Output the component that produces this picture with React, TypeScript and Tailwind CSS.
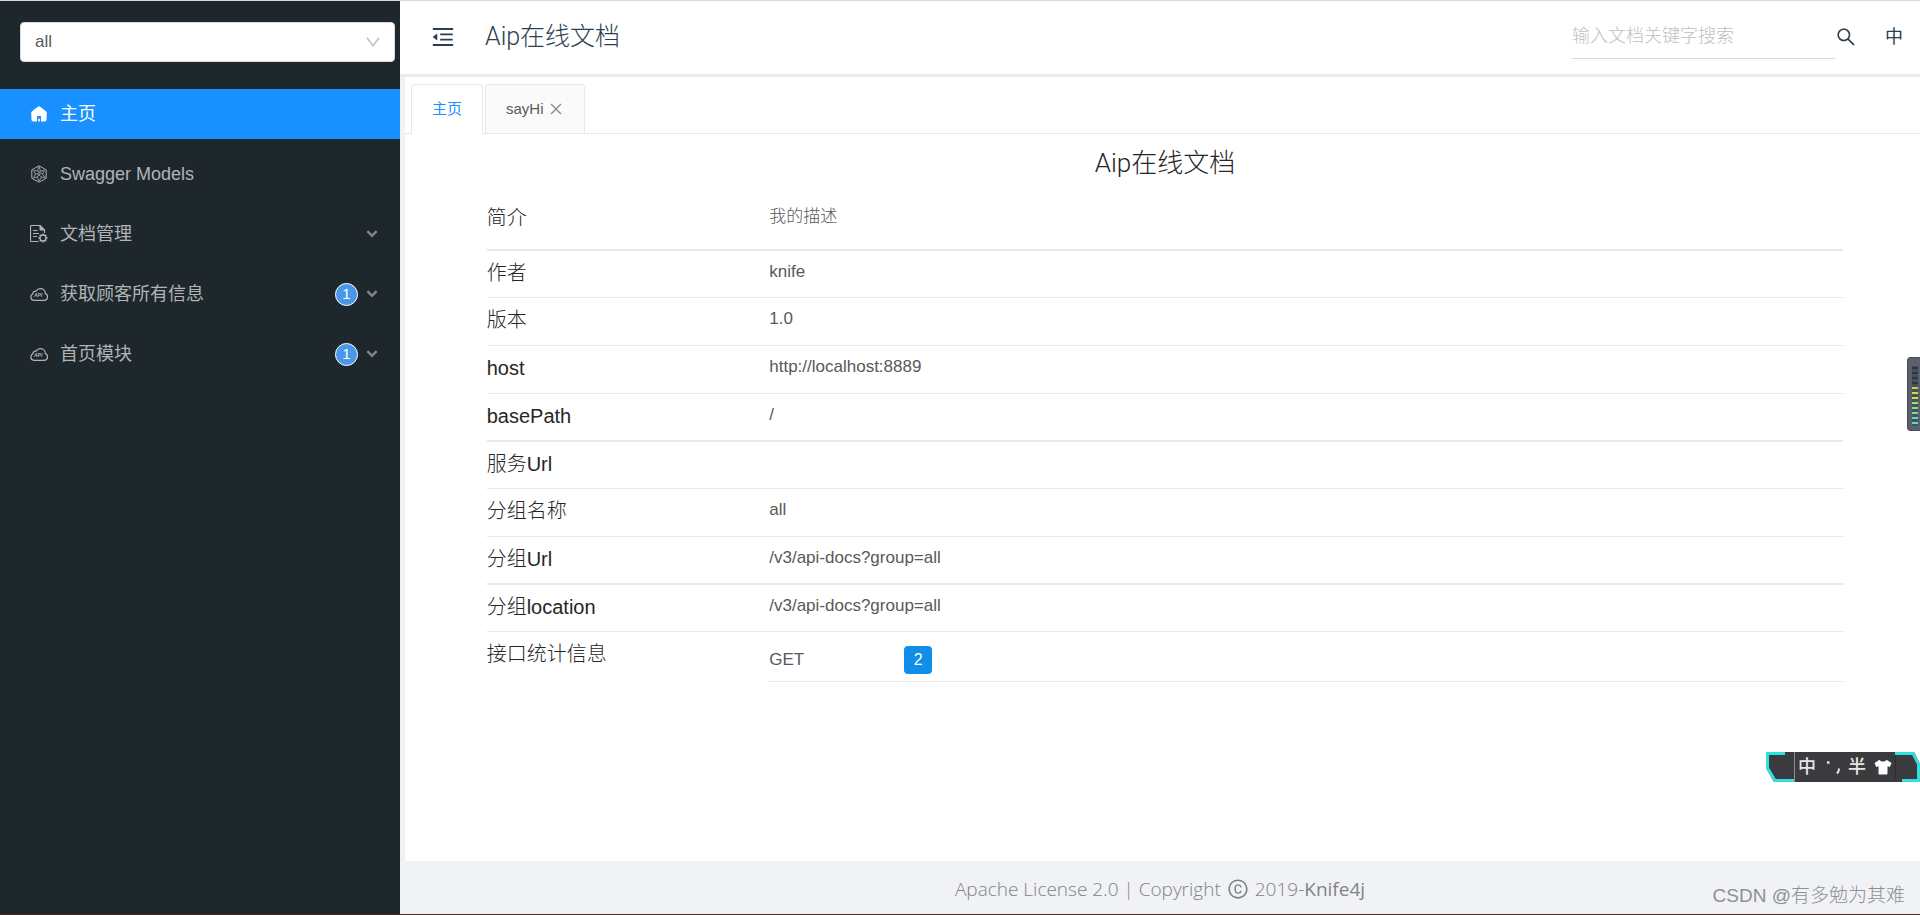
import React, { useState } from 'react';
import { AiOutlineClose, AiOutlineCopyright, AiOutlineMenuFold, AiOutlineSearch } from 'react-icons/ai';

interface MenuEntry {
  label: string;
  icon: React.ReactNode;
  count?: number;
  expandable?: boolean;
}

interface InfoRow {
  label: string;
  value: string;
  rowClass: string;
}

const HomeIcon = () => (
  <svg viewBox="0 0 16 16" className="w-4 h-4" fill="currentColor">
    <path
      fillRule="evenodd"
      d="M7.2.6a1.3 1.3 0 0 1 1.6 0l6.1 4.6c.6.4.9 1 .9 1.700l-.3 6.900c-.1 1-.8 1.600-1.700 1.600H2.200c-.9 0-1.600-.6-1.700-1.600L.2 6.900c0-.7.3-1.300.9-1.700zM6 10v5.400h1.200v-2.600h1.700v2.600H10V10z"
    />
  </svg>
);

const ModelsIcon = () => (
  <svg viewBox="0 0 16 18" className="w-4 h-[18px]" fill="none" stroke="currentColor" strokeWidth="1">
    <path d="M8 .8l7.200 4v8.400L8 17.200l-7.200-4V4.800z" />
    <path d="M2.500 5.500l4 .5L8 1.500l1.500 4.500 4-.5-2 3.500 2.500 3.500-3.500-.5L8 16l-2-4-3.500.7L4.500 9z" strokeWidth=".8" />
    <path d="M6.500 6l5 3M4.500 9h5L6 12M9.500 6l-3 3M10.500 12l-4-3" strokeWidth=".7" />
  </svg>
);

const DocIcon = () => (
  <svg viewBox="0 0 18 18" className="w-[18px] h-[18px]" fill="none" stroke="currentColor">
    <path d="M8.500 16.500h-7a1 1 0 0 1-1-1v-14a1 1 0 0 1 1-1h8.500l4.500 4.500V8" strokeWidth="1.200" />
    <path d="M10 .5v4.500h4.500z" fill="currentColor" />
    <path d="M3 5.500h4.500M3 8.500h6M3 11.500h4" />
    <circle cx="13" cy="13" r="3" strokeWidth="1.300" />
    <path d="M13 8.400v1.600M13 16v1.600M8.400 13H10M16 13h1.600M9.800 9.800l1 1M15.200 15.200l1 1M9.800 16.200l1-1M15.200 10.800l1-1" strokeWidth="1.400" />
  </svg>
);

const CloudIcon = () => (
  <svg viewBox="0 0 18 13" className="w-[18px] h-[13px]" fill="none" stroke="currentColor" strokeWidth="1.200">
    <path d="M4 12.300h10a3.500 3.500 0 0 0 1.400-6.700C15.300 2.600 13 .7 10.300.7 8.300.7 6.900 1.700 6.100 3.200 4.200 2.800 2.900 4 2.900 5.700.2 7.200-.2 11.700 4 12.300z" />
    <text x="4" y="9" fontSize="5" fontStyle="italic" fontWeight="bold" fontFamily="Liberation Sans, sans-serif" fill="currentColor" stroke="none">
      API
    </text>
  </svg>
);

const ChevronIcon = () => (
  <svg viewBox="0 0 12 8" className="w-3 h-2 text-[#82878a]" fill="none" stroke="currentColor" strokeWidth="2.400">
    <path d="M1.400 1.200L6 5.800l4.600-4.600" />
  </svg>
);

const ShirtIcon = () => (
  <svg viewBox="0 0 18 16" className="w-[18px] h-4" fill="currentColor">
    <path d="M5.500.8C6.500 3.200 11.500 3.200 12.500.8L17.500 4l-1.700 4-2.300-.8v7.200a1 1 0 0 1-1 1h-7a1 1 0 0 1-1-1V7.200L2.200 8 .5 4z" />
  </svg>
);

const menuEntries: MenuEntry[] = [
  { label: '主页', icon: <HomeIcon /> },
  { label: 'Swagger Models', icon: <ModelsIcon /> },
  { label: '文档管理', icon: <DocIcon />, expandable: true },
  { label: '获取顾客所有信息', icon: <CloudIcon />, count: 1, expandable: true },
  { label: '首页模块', icon: <CloudIcon />, count: 1, expandable: true },
];

const infoRows: InfoRow[] = [
  { label: '简介', value: '我的描述', rowClass: 'h-[54px] border-b-2' },
  { label: '作者', value: 'knife', rowClass: 'h-[47px] border-b' },
  { label: '版本', value: '1.0', rowClass: 'h-12 border-b' },
  { label: 'host', value: 'http://localhost:8889', rowClass: 'h-12 border-b' },
  { label: 'basePath', value: '/', rowClass: 'h-12 border-b-2' },
  { label: '服务Url', value: '', rowClass: 'h-[47px] border-b' },
  { label: '分组名称', value: 'all', rowClass: 'h-12 border-b' },
  { label: '分组Url', value: '/v3/api-docs?group=all', rowClass: 'h-12 border-b-2' },
  { label: '分组location', value: '/v3/api-docs?group=all', rowClass: 'h-[47px] border-b' },
];

const meterColors = [
  'bg-[#30323c]',
  'bg-[#30323c]',
  'bg-[#30323c]',
  'bg-[#30323c]',
  'bg-[#e5c23c]',
  'bg-[#dcd34a]',
  'bg-[#c8dc50]',
  'bg-[#a9dc62]',
  'bg-[#8adb74]',
  'bg-[#78d99a]',
  'bg-[#5fd9b4]',
  'bg-[#58dcc8]',
];

const Sidebar: React.FC = () => {
  const [active, setActive] = useState(0);

  return (
    <aside className="w-[400px] shrink-0 bg-[#1e282c]">
      <div className="relative pt-[21px] pl-5 pr-[5px]">
        <select
          aria-label="分组"
          className="block w-full h-10 px-[14px] appearance-none rounded border border-[#d9d9d9] bg-white text-[17px] text-[#595959]"
        >
          <option>all</option>
        </select>
        <svg viewBox="0 0 14 10" className="absolute right-5 top-9 w-[14px] h-[10px] text-[#bfbfbf] pointer-events-none" fill="none" stroke="currentColor" strokeWidth="1.500">
          <path d="M1 .8l6 8 6-8" />
        </svg>
      </div>
      <nav className="mt-[27px]">
        <ul className="space-y-[10px]">
          {menuEntries.map((entry, index) => (
            <li key={entry.label}>
              <a
                href="#"
                onClick={() => setActive(index)}
                className={`flex items-center h-[50px] pl-[30px] pr-[22px] text-lg ${
                  index === active ? 'bg-[#1890ff] text-white' : 'text-[#b0b4b6]'
                }`}
              >
                <span className="w-[18px] mr-3 flex justify-center">{entry.icon}</span>
                <span className="flex-1">{entry.label}</span>
                {entry.count && (
                  <span className="flex items-center justify-center w-[23px] h-[23px] mr-2 rounded-full border border-white bg-[#4a97e8] text-white text-[15px]">
                    {entry.count}
                  </span>
                )}
                {entry.expandable && <ChevronIcon />}
              </a>
            </li>
          ))}
        </ul>
      </nav>
    </aside>
  );
};

const Header: React.FC = () => (
  <header className="flex items-center h-[76px] pb-[2px] pl-[30px] pr-[17px] bg-white border-b-[3px] border-[#e7eaee] text-[#2c3e50]">
    <button aria-label="收起菜单">
      <AiOutlineMenuFold size={26} />
    </button>
    <h1 className="flex-1 ml-[29px] font-['Roboto','Noto_Sans_CJK_SC',sans-serif] text-[25px] font-light">Aip在线文档</h1>
    <input
      type="text"
      aria-label="搜索"
      placeholder="输入文档关键字搜索"
      className="w-[263px] h-11 border-b border-[#d9d9d9] text-lg font-light outline-none placeholder:text-[#bfbfbf]"
    />
    <button aria-label="搜索文档">
      <AiOutlineSearch size={22} />
    </button>
    <button className="ml-7 text-lg">中</button>
  </header>
);

const Tabs: React.FC = () => (
  <div role="tablist" className="flex pl-[6px] pt-[7px] border-b border-[#e8e8e8] text-[15px]">
    <button role="tab" aria-selected="true" className="h-[50px] -mb-px px-5 rounded-t border border-b-0 border-[#e8e8e8] bg-white text-[#1890ff]">
      主页
    </button>
    <div className="flex items-center h-[49px] ml-[2px] px-5 rounded-t border border-b-0 border-[#e8e8e8] bg-[#fafafa] text-[#595959]">
      <button role="tab" aria-selected="false">
        sayHi
      </button>
      <button aria-label="关闭" className="ml-1 text-[#8c8c8c]">
        <AiOutlineClose size={16} />
      </button>
    </div>
  </div>
);

const ApiInfo: React.FC = () => (
  <main className="flex-1 pl-5 pr-[15px] pb-10">
    <div className="w-11/12 mx-auto">
      <h2 className="h-[62px] pt-2 text-center font-['Roboto','Noto_Sans_CJK_SC',sans-serif] text-[26px] leading-[42px] font-light text-[#262626]">
        Aip在线文档
      </h2>
      <table className="w-full table-fixed border-collapse text-left">
        <colgroup>
          <col className="w-[20.83%]" />
          <col />
        </colgroup>
        <tbody>
          {infoRows.map((row) => (
            <tr key={row.label} className={`border-[#e8e8e8] align-top ${row.rowClass}`}>
              <th scope="row" className="p-0 pt-2 text-xl leading-7 font-light text-[#262626]">
                {row.label}
              </th>
              <td className="p-0 pt-[7px] text-[17px] leading-7 font-light text-[#595959]">{row.value}</td>
            </tr>
          ))}
          <tr className="align-top">
            <th scope="row" className="p-0 pt-2 text-xl leading-7 font-light text-[#262626]">
              接口统计信息
            </th>
            <td className="h-[50px] p-0 pt-[14px] border-b border-[#e8e8e8] text-[17px] leading-7 font-light text-[#595959]">
              <div className="flex">
                <span className="w-[135px]">GET</span>
                <span className="flex items-center justify-center w-7 h-7 rounded bg-[#108ee9] text-base leading-none text-white">2</span>
              </div>
            </td>
          </tr>
        </tbody>
      </table>
    </div>
  </main>
);

const Footer: React.FC = () => (
  <footer className="flex items-center justify-center h-[53px] pt-[3px] bg-[#f0f2f5] font-['Open_Sans','Noto_Sans_CJK_SC',sans-serif] text-[19px] font-light text-[#808386]">
    Apache License 2.0 | Copyright
    <AiOutlineCopyright size={22} className="mx-[6px]" />
    2019-
    <a href="#" className="font-normal">
      Knife4j
    </a>
  </footer>
);

// Level meter docked to the right edge
const LevelMeter: React.FC = () => (
  <div className="absolute right-0 top-[356px] w-[13px] h-[74px] pt-2 pl-1 pr-[2px] rounded-l border border-r-0 border-[#4a4d58] bg-[#5b5f6e]">
    {meterColors.map((color, index) => (
      <div key={index} className="h-[5px] pt-px bg-[#44525a]">
        <div className={`h-[2px] ${color}`} />
      </div>
    ))}
  </div>
);

// Floating input method bar
const InputBar: React.FC = () => (
  <div className="absolute right-0 top-[751px] w-[154px] h-[30px] text-[#e6e6e6]">
    <svg viewBox="0 0 154 30" className="absolute inset-0 w-full h-full" fill="none">
      <path d="M0 0H148L154 12V30H8L0 16z" fill="#3a3a3f" />
      <path d="M19 1.500H1.500V16L9 28.500H29" stroke="#2fe0e0" strokeWidth="3" />
      <path d="M129 1.500H147L152.500 12V28.500H136" stroke="#2fe0e0" strokeWidth="3" />
      <path d="M28.500 0V30" stroke="#8c8c90" />
      <path d="M129.500 3V27" stroke="#2c2c30" />
    </svg>
    <div className="relative flex items-center h-full pl-8 text-lg font-medium">
      <span>中</span>
      <svg viewBox="0 0 16 18" className="w-4 h-[18px] mx-2" fill="none" stroke="currentColor">
        <path d="M3 4.500h2.500" strokeWidth="2.500" />
        <path d="M15 10.500c0 2-.5 3.500-2 5" strokeWidth="2" />
      </svg>
      <span>半</span>
      <span className="ml-2 text-white">
        <ShirtIcon />
      </span>
    </div>
  </div>
);

const App: React.FC = () => {
  return (
    <div className="relative flex min-h-screen overflow-hidden border-t border-b border-t-[#d9d9d9] border-b-[#43292e] bg-[#f0f2f5] font-['Liberation_Sans','Noto_Sans_CJK_SC',sans-serif]">
      <Sidebar />
      <div className="flex flex-col flex-1 min-w-0">
        <Header />
        <div className="flex flex-col flex-1 ml-[5px] bg-white">
          <Tabs />
          <ApiInfo />
        </div>
        <Footer />
      </div>
      <LevelMeter />
      <InputBar />
      <span className="absolute right-[15px] bottom-1 text-[19px] font-light text-[#8e9093]">CSDN @有多勉为其难</span>
    </div>
  );
};

export default App;
